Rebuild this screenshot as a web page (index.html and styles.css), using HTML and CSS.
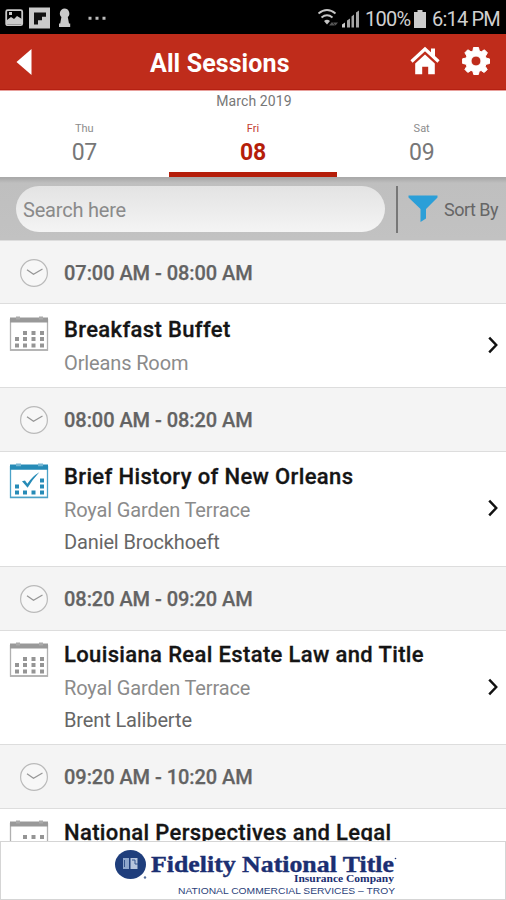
FILE: index.html
```html
<!DOCTYPE html>
<html lang="en">
<head>
<meta charset="utf-8">
<title>All Sessions</title>
<link rel="stylesheet" href="styles.css">
</head>
<body>
<svg class="defs" width="0" height="0" aria-hidden="true">
  <symbol id="clock" viewBox="0 0 30 30"><circle cx="15" cy="15" r="13.4" fill="#f7f7f7" stroke="#bababa" stroke-width="1.2"/><path d="M8 11.800l6.500 4.400 9-5.200" fill="none" stroke="#969696" stroke-width="1.3"/></symbol>
  <symbol id="cal" viewBox="0 0 40 36"><path d="M1.500 3v31h37V3" fill="#fff" stroke="#b0b0b0" stroke-width="1.300"/><path d="M1 34h38" stroke="#b0b0b0" stroke-width="1.300"/><path d="M1 1.600h38v4.800H1z" fill="#999"/><path d="M7 .6h4v3H7zM30 .6h4v3h-4z" fill="#aaa"/><path d="M14 15h4v4h-4zM22.500 15h4v4h-4zM31 15h4v4h-4zM6 21h4v4H6zM14 21h4v4h-4zM22.500 21h4v4h-4zM31 21h4v4h-4zM6 27.500h4v4H6zM14 27.500h4v4h-4zM22.500 27.500h4v4h-4zM31 27.500h4v4h-4z" fill="#959595"/></symbol>
  <symbol id="calcheck" viewBox="0 0 40 36"><path d="M1.500 3v31.500h37V3" fill="#fff" stroke="#4ba2c8" stroke-width="1.300"/><path d="M1 34.300h38" stroke="#4ba2c8" stroke-width="1.300"/><path d="M1 1.600h38v5.200H1z" fill="#268bb7"/><path d="M7 .6h5v2.600H7zM29 .6h5v2.600h-5z" fill="#74b6d3"/><path d="M31 15.500h4v4h-4zM6 21.500h4v4H6zM31 21.500h4v4h-4zM6 27.500h4v4H6zM14 27.500h4v4h-4zM22.500 27.500h4v4h-4zM31 27.500h4v4h-4z" fill="#268bb7"/><path d="M13 18.200l3-.8 2.300 3.400Q23 13.500 30.300 9.200 23.800 16 18.600 24.800z" fill="#268bb7"/></symbol>
  <symbol id="chev" viewBox="0 0 12 20"><path d="M1.800 1.800L9.600 10 1.800 18.200" fill="none" stroke="#111" stroke-width="2.700"/></symbol>
</svg>
<div class="app">
  <div class="status">
    <svg class="status-left" width="110" height="34" viewBox="0 0 110 34">
      <rect x="6.200" y="10.200" width="16" height="15" rx="1.500" fill="none" stroke="#cacaca" stroke-width="1.800"/><path d="M7 24v-4l4-3 3 2 3-3 5 3v5z" fill="#cacaca"/><path d="M9 12h3v3H9z" fill="#cacaca"/>
      <path d="M29 7.500h21v21H29z" fill="#cacaca"/><path d="M34 12.500h12v4.200h-4v3.600h-4v4.200h-4z" fill="#111"/>
      <path d="M64.500 8.500a5 5 0 0 1 3.300 8.600l1.200 6.400h1.200V27H59v-3.500h1.200l1.200-6.400a5 5 0 0 1 3.100-8.600z" fill="#cacaca"/>
      <path d="M88.500 16.700h3v3h-3zM95.500 16.700h3v3h-3zM102.500 16.700h3v3h-3z" fill="#bbb"/>
    </svg>
    <div class="status-right">
      <svg width="44" height="24" viewBox="0 0 44 24"><g fill="none" stroke="#c6c6c6" stroke-width="1.800"><path d="M1.500 6.500q8.500-7 17 0M4.500 10.500q5.500-4.500 11 0"/></g><path d="M7 14q3-2.400 6 0l-3 3.500z" fill="#c6c6c6"/><path d="M12 18.500l3-3.500 3 3.500zM16 15.500h5l-2.500 3z" fill="#555"/><path d="M25 20.500v-3l3-2v5z" fill="#ccc"/><path d="M30 20.500v-7l3-2v9zM34.500 20.500v-11l2.500-2v13zM39 20.500v-15l3-2v17z" fill="#a5a5a5"/></svg>
      <span class="pct">100%</span>
      <svg class="battery" width="12" height="18" viewBox="0 0 12 18"><path d="M3.500 0h5v2H12v16H0V2h3.500z" fill="#ccc"/></svg>
      <span class="time">6:14 PM</span>
    </div>
  </div>
  <header class="bar">
    <svg class="back" width="16" height="28" viewBox="0 0 16 28"><path d="M15.500 1v26L.5 14z" fill="#fff"/></svg>
    <h1>All Sessions</h1>
    <svg class="home" width="30" height="30" viewBox="0 0 30 30"><path d="M1.500 15.500L15 3l13.500 12.500" fill="none" stroke="#fff" stroke-width="3.200"/><path d="M21 2.500h4v9l-4-4zM5.200 17.500L15 8.600l9.800 8.900v10.800h-6.600v-7.600h-6v7.600h-7z" fill="#fff"/></svg>
    <svg class="gear" width="28" height="28" viewBox="0 0 28 28"><path fill="#fff" stroke="#fff" stroke-width="1" stroke-linejoin="round" fill-rule="evenodd" d="M11.500 .5h5l.8 3.500 2 .8 3.100-2 3 3-2 3.400.7 1.900 3.400.8v4.600l-3.500.8-.8 2 2 3.200-3 3-3.100-2-1.900.7-.8 3.300h-4.700l-.8-3.300-1.900-.8-3.200 2-2.900-3 2-3.200-.8-2-3.500-.8v-4.600l3.600-.8.7-1.900-2-3.300 2.900-3 3.300 2 1.900-.8zM14 9a5 5 0 1 0 0 10a5 5 0 0 0 0-10z"/></svg>
  </header>
  <section class="dates">
    <div class="month">March 2019</div>
    <div class="days">
      <div class="day"><small>Thu</small><b>07</b></div>
      <div class="day on"><small>Fri</small><b>08</b></div>
      <div class="day"><small>Sat</small><b>09</b></div>
    </div>
  </section>
  <section class="tools">
    <div class="search">Search here</div>
    <div class="rule"></div>
    <svg class="funnel" width="30" height="28" viewBox="0 0 30 28"><path d="M.5.500h29v2L18 14v9.500L12.500 27V14L.5 2.500z" fill="#2b9fd8"/></svg>
    <span>Sort By</span>
  </section>
  <main class="list">
    <div class="slot first"><svg><use href="#clock"/></svg><span>07:00 AM - 08:00 AM</span></div>
    <article class="item short"><svg class="cal"><use href="#cal"/></svg><div class="text"><h2>Breakfast Buffet</h2><p class="room">Orleans Room</p></div><svg class="chev"><use href="#chev"/></svg></article>
    <div class="slot"><svg><use href="#clock"/></svg><span>08:00 AM - 08:20 AM</span></div>
    <article class="item tall"><svg class="cal"><use href="#calcheck"/></svg><div class="text"><h2>Brief History of New Orleans</h2><p class="room">Royal Garden Terrace</p><p class="who">Daniel Brockhoeft</p></div><svg class="chev"><use href="#chev"/></svg></article>
    <div class="slot"><svg><use href="#clock"/></svg><span>08:20 AM - 09:20 AM</span></div>
    <article class="item"><svg class="cal"><use href="#cal"/></svg><div class="text"><h2>Louisiana Real Estate Law and Title</h2><p class="room">Royal Garden Terrace</p><p class="who">Brent Laliberte</p></div><svg class="chev"><use href="#chev"/></svg></article>
    <div class="slot"><svg><use href="#clock"/></svg><span>09:20 AM - 10:20 AM</span></div>
    <article class="item"><svg class="cal"><use href="#cal"/></svg><div class="text"><h2>National Perspectives and Legal</h2></div></article>
  </main>
  <footer class="sponsor">
    <svg width="290" height="56" viewBox="0 0 290 56">
      <ellipse cx="20.500" cy="22.500" rx="15.500" ry="14.500" fill="#1f3e7c"/><path d="M13 16h6v11h-6z" fill="#8ea6cc"/><path d="M20.500 16h7v11h-7z" fill="#b7c5dd"/><path d="M22 18h3v4h3M14.500 18v7" fill="none" stroke="#35548d"/><circle cx="35" cy="35.500" r="1.200" fill="#58709b"/>
      <g fill="#1b2f72" class="brand">
      <text x="41" y="30" font-size="24" textLength="243" lengthAdjust="spacingAndGlyphs" stroke="#1b2f72" stroke-width=".4">Fidelity National Title</text>
      <text x="184" y="40" font-size="10" textLength="100" lengthAdjust="spacingAndGlyphs">Insurance Company</text></g>
      <text class="services" x="68" y="51.500" font-size="8.500" textLength="217" lengthAdjust="spacingAndGlyphs">NATIONAL COMMERCIAL SERVICES – TROY</text>
      <circle cx="285.500" cy="16.500" r=".8" fill="#1b2f72"/>
    </svg>
  </footer>
</div>
</body>
</html>
```
FILE: styles.css
```css
* { box-sizing: border-box; }
body { margin: 0; font-family: Roboto, "Liberation Sans", sans-serif; }
h1, h2, p { margin: 0; }
svg { display: block; flex: none; }
.defs { position: absolute; }
.app { width: 506px; height: 900px; display: flex; flex-direction: column; overflow: hidden; background: #fff; }
.status { height: 34px; flex: none; background: #000; display: flex; justify-content: space-between; color: #d0d0d0; }
.status-right { display: flex; align-items: center; padding: 3px 6px 0 0; }
.status-right svg:first-child { margin-right: 4px; }
.pct, .time { font-size: 20px; line-height: 30px; white-space: nowrap; }
.pct { width: 44px; letter-spacing: -.7px; }
.battery { margin: 0 6px 0 5px; }
.time { width: 68px; letter-spacing: -.8px; }
.bar { height: 56px; flex: none; display: flex; align-items: center; background: #bf2c1b; border-bottom: 1px solid #b52012; padding: 0 16px; color: #fff; }
.back { margin-top: 1px; }
h1 { flex: 1; margin-left: 118px; font-size: 25px; font-weight: 700; letter-spacing: .1px; padding-top: 3px; }
.home { margin: 0 22px 1px 0; }
.gear { margin-bottom: 1px; }
.dates { height: 88px; flex: none; border-top: 1px solid #e8a09c; border-bottom: 1px solid #aaa; display: flex; flex-direction: column; color: #777; }
.month { text-align: center; font-size: 14px; line-height: 20px; letter-spacing: .1px; padding-left: 2px; }
.days { flex: 1; display: flex; }
.day { flex: 1; display: flex; flex-direction: column; align-items: center; padding-top: 11px; border-bottom: 5px solid transparent; }
.day small { font-size: 11px; line-height: 14px; color: #8c8c8c; }
.day b { font-size: 23px; line-height: 34px; font-weight: 400; letter-spacing: -.3px; }
.day.on { border-color: #b51e0a; }
.day.on small { color: #c4402f; }
.day.on b { color: #b51e0a; font-weight: 700; }
.tools { height: 62px; flex: none; display: flex; align-items: center; background: linear-gradient(#a9a9a9, #bfbfbf 5px, #c2c2c2); padding-left: 16px; color: #666; font-size: 18px; }
.search { width: 369px; height: 46px; border-radius: 23px; background: linear-gradient(#e3e3e3, #f4f4f4); color: #8a8a8a; font-size: 20px; line-height: 48px; letter-spacing: -.2px; padding-left: 7px; }
.rule { width: 2px; height: 47px; margin-left: 11px; background: #777; }
.funnel { margin: 0 6px 0 10px; }
.tools span { white-space: nowrap; letter-spacing: -.5px; }
.list { flex: 1; min-height: 0; overflow: hidden; }
.slot { height: 65px; display: flex; align-items: center; background: #f4f4f4; border-top: 1px solid #ddd; border-bottom: 1px solid #ddd; padding: 0 0 0 19px; color: #636363; font-size: 20px; font-weight: 500; letter-spacing: -.05px; }
.slot.first { height: 64px; padding-top: 1px; }
.slot svg { width: 30px; height: 30px; margin-right: 15px; }
.slot span { padding-top: 1px; -webkit-text-stroke: .25px #636363; }
.item { height: 113px; display: flex; padding: 8px 7px 0 9px; }
.item.short { height: 83px; padding-top: 9px; }
.item.tall { height: 114px; }
.cal { width: 40px; height: 36px; margin: 3px 15px 0 0; }
.text { flex: 1; white-space: nowrap; }
.short .text, .tall .text { padding-top: 1px; }
h2 { font-size: 22px; line-height: 32px; font-weight: 500; letter-spacing: .36px; color: #151515; -webkit-text-stroke: .3px #151515; }
.room { font-size: 20px; line-height: 34px; letter-spacing: -.13px; color: #8b8b8b; }
.who { font-size: 20px; line-height: 30px; letter-spacing: -.13px; color: #666; }
.chev { width: 12px; height: 18px; align-self: center; margin-top: -10px; }
.sponsor { height: 59px; flex: none; display: flex; justify-content: center; border: 1px solid #d5d5d5; background: #fff; padding-left: 4px; }
.brand { font-family: "Liberation Serif", serif; font-weight: 700; }
.services { font-family: "Liberation Sans", sans-serif; font-weight: 400; fill: #2b3f7a; }
```
